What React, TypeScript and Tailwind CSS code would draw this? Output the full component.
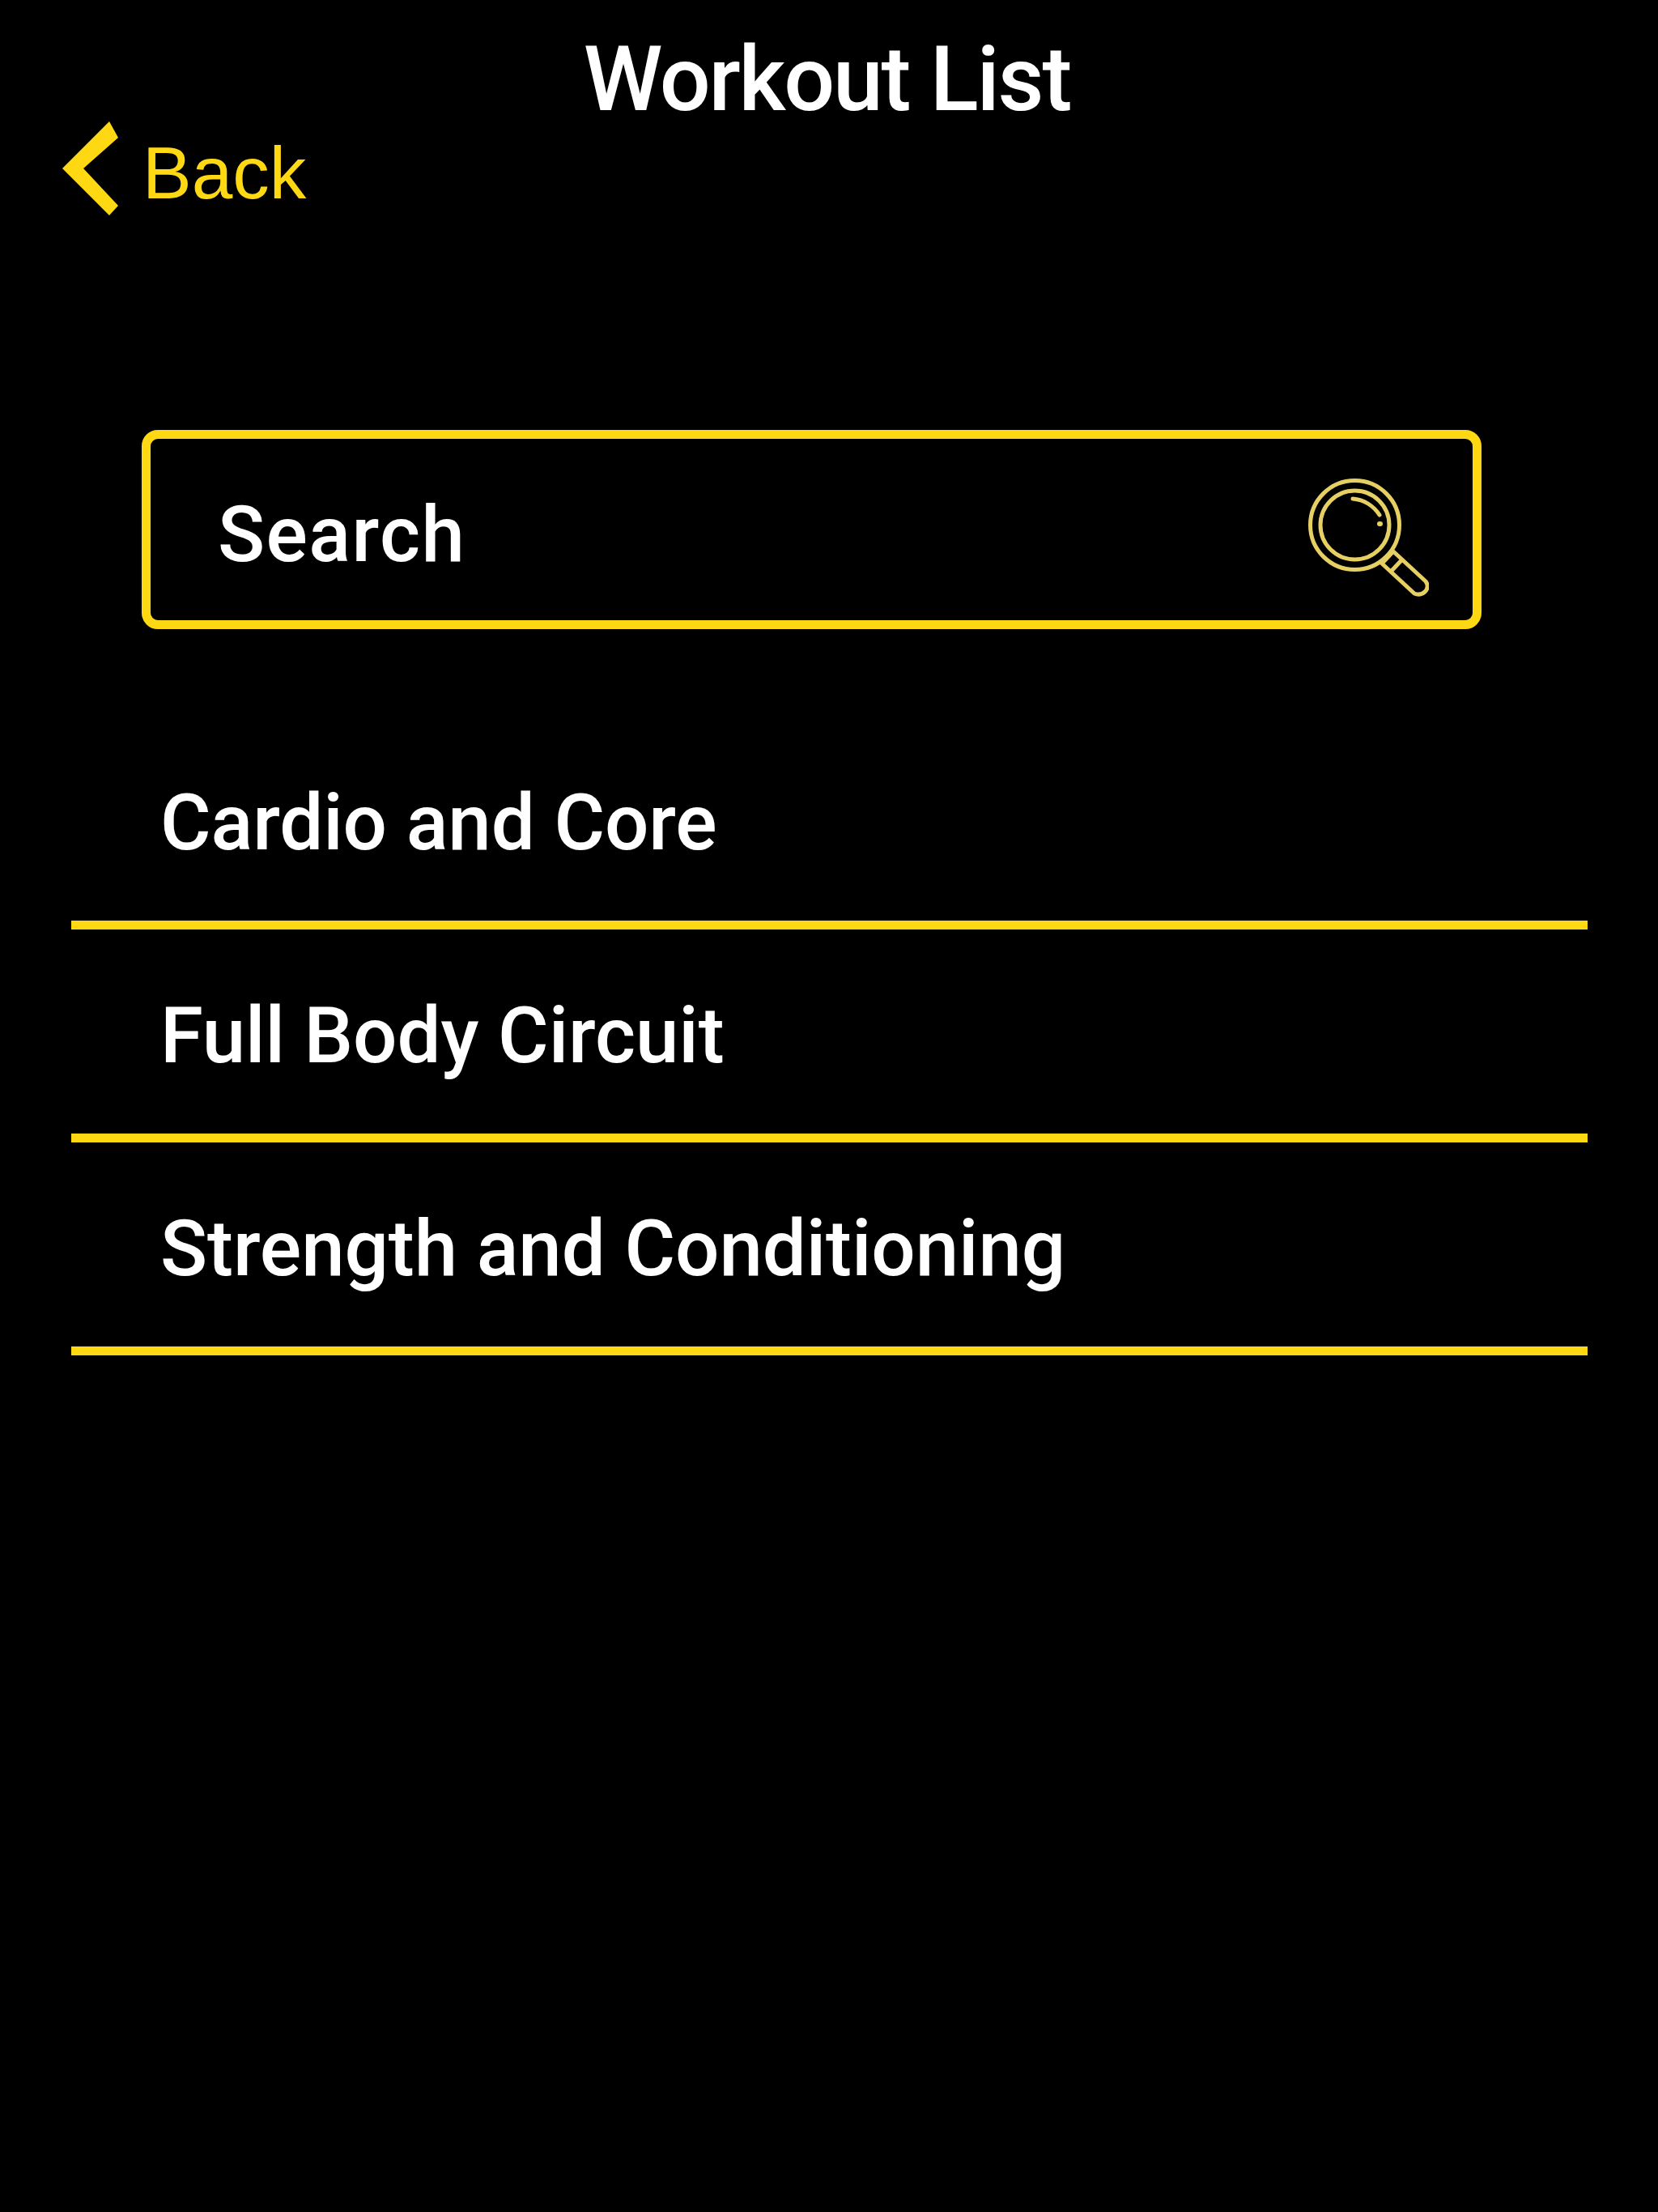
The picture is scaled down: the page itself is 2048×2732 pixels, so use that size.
const items = ["Cardio and Core", "Full Body Circuit", "Strength and Conditioning"];

function SearchIcon() {
  return (
    <svg width="150" height="150" viewBox="0 0 150 150" fill="none" stroke="#E6CF63" strokeWidth="5" className="shrink-0 blur-[0.6px]">
      <circle cx="58.5" cy="59.5" r="55" />
      <circle cx="58.5" cy="59.5" r="42.5" />
      <path d="M56 27 C70 28 82 36 89 47" strokeWidth="5" strokeLinecap="round" />
      <path d="M89 58 L90 58" strokeWidth="6" strokeLinecap="round" />
      <path d="M92 107 L106 92 L146 129 Q151 136 145 142 Q139 147 132 144 Z" strokeLinejoin="round" />
      <path d="M103 117 L117 102" />
    </svg>
  );
}

export default function App() {
  return (
    <div className="flex h-[2732px] w-[2048px] flex-col bg-black font-['Roboto',sans-serif] text-white">
      <h1 className="mt-[46px] h-[104px] pr-[5px] text-center text-[111px] leading-[104px] font-medium tracking-[-2.2px]">Workout List</h1>
      <div className="flex h-[116px] items-center pl-[77px]">
        <svg width="69" height="116" viewBox="0 0 69 116" className="shrink-0">
          <path d="M58 0 L69 20 L26 58 L69 104 L58 116 L0 58 Z" fill="#FFD814" />
        </svg>
        <span className="mt-[11px] ml-[30px] font-['Liberation_Sans',sans-serif] text-[91px] leading-none text-[#FFD814]">Back</span>
      </div>
      <div className="mt-[265px] ml-[175px] flex h-[246px] w-[1655px] items-center justify-between rounded-[20px] border-[11px] border-[#FFD814] pr-[54px] pl-[83px]">
        <span className="mt-[12px] text-[96px] leading-none font-medium tracking-[1.4px]">Search</span>
        <div className="mt-[20px]"><SearchIcon /></div>
      </div>
      <ul className="mt-[108px] mx-[88px] w-[1873px]">
        {items.map((t) => (
          <li key={t} className="flex h-[263px] items-center border-b-[11px] border-[#FFD814] pt-[10px] pl-[110px] text-[96px] leading-none font-medium tracking-[-0.1px]">{t}</li>
        ))}
      </ul>
    </div>
  );
}
